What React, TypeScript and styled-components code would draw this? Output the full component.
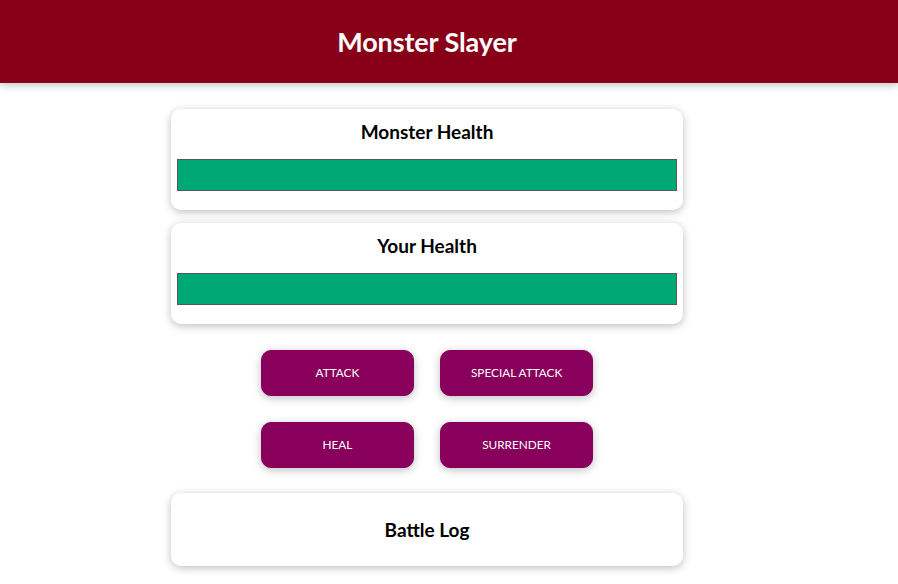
import React from "react";
import styled, { createGlobalStyle } from "styled-components";

const GlobalStyle = createGlobalStyle`
  html, body { margin: 0; padding: 0; background: #ffffff; }
  body { font-family: "Lato", "Open Sans", sans-serif; }
  * { box-sizing: border-box; }
`;

const Header = styled.header`
  box-shadow: 0 2px 8px rgba(0, 0, 0, 0.26);
  background-color: #880017;
  color: #ffffff;
  height: 83px;
  display: flex;
  align-items: center;
  justify-content: center;
  padding-right: 44px;
  margin-bottom: 25.6px;
`;

const Title = styled.h1`
  margin: 0;
  font-size: 27px;
  font-weight: 700;
  letter-spacing: -0.1px;
`;

const Page = styled.main`
  width: 854px;
`;

const Section = styled.section`
  width: 512px;
  margin: 0 auto;
`;

const Card = styled.div`
  text-align: center;
  padding: 6.4px;
  margin: 12.8px 0;
  box-shadow: 0 2px 8px rgba(0, 0, 0, 0.26);
  border-radius: 10px;
  background: #ffffff;
`;

const CardTitle = styled.h2<{ $log?: boolean }>`
  margin: ${(p) => (p.$log ? "16px 0" : "3.2px 0 0")};
  font-size: 19px;
  line-height: 27.7px;
  font-weight: 700;
  color: #000000;
`;

const HealthBar = styled.div`
  width: 100%;
  height: 32px;
  border: 1px solid #575757;
  margin: 12.8px 0;
  background: #fde5e5;
`;

const HealthValue = styled.div`
  background-color: #00a876;
  height: 100%;
`;

const Controls = styled.section`
  width: 512px;
  margin: 0 auto;
  display: flex;
  flex-wrap: wrap;
  justify-content: center;
`;

const Button = styled.button`
  font-family: inherit;
  font-size: 11.8px;
  line-height: 20px;
  border: 1px solid #88005b;
  background-color: #88005b;
  color: #ffffff;
  padding: 12px 0;
  border-radius: 10px;
  margin: 12.8px;
  width: 153.6px;
  height: 46.4px;
  cursor: pointer;
  box-shadow: 0 2px 8px rgba(0, 0, 0, 0.26);
  text-transform: uppercase;
`;

function HealthCard({ title, value }: { title: string; value: number }) {
  return (
    <Card>
      <CardTitle>{title}</CardTitle>
      <HealthBar>
        <HealthValue style={{ width: `${value}%` }} />
      </HealthBar>
    </Card>
  );
}

export default function App() {
  return (
    <>
      <GlobalStyle />
      <Header>
        <Title>Monster Slayer</Title>
      </Header>
      <Page>
        <Section>
          <HealthCard title="Monster Health" value={100} />
          <HealthCard title="Your Health" value={100} />
        </Section>
        <Controls>
          <Button>Attack</Button>
          <Button>Special Attack</Button>
          <Button>Heal</Button>
          <Button>Surrender</Button>
        </Controls>
        <Section>
          <Card>
            <CardTitle $log>Battle Log</CardTitle>
          </Card>
        </Section>
      </Page>
    </>
  );
}
